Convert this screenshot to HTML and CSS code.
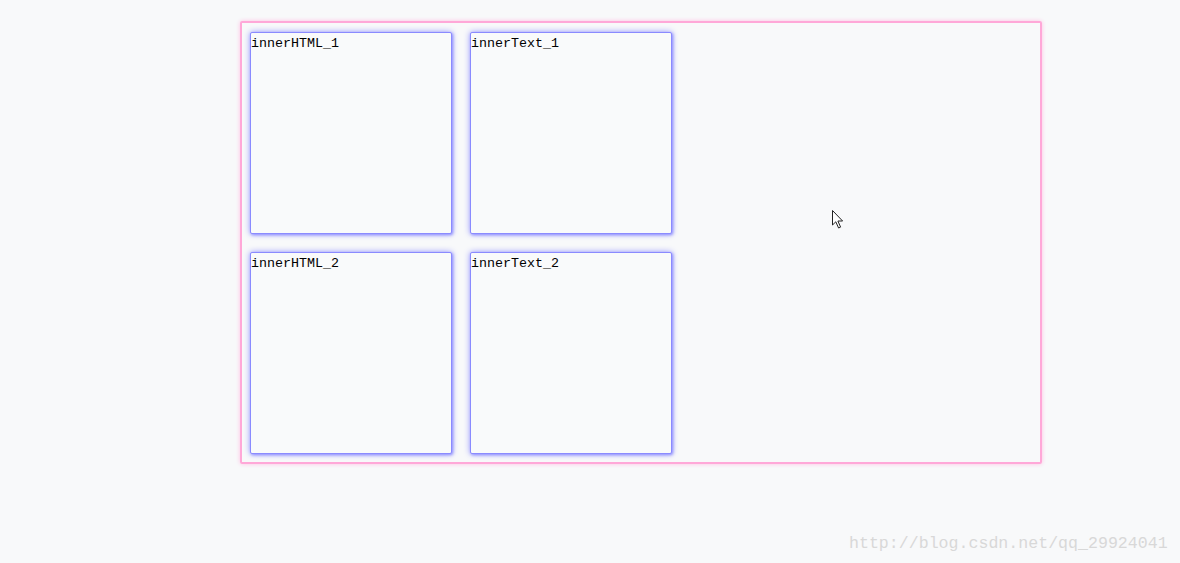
FILE: index.html
```html
<!DOCTYPE html>
<html lang="zh">
<head>
  <meta charset="UTF-8">
  <meta name="viewport" content="width=device-width, initial-scale=1.0">
  <title>innerHTML / innerText</title>
  <link rel="stylesheet" href="styles.css">
</head>
<body>
  <div class="wrap">
    <div class="box">innerHTML_1</div>
    <div class="box">innerText_1</div>
    <div class="box">innerHTML_2</div>
    <div class="box">innerText_2</div>
  </div>

  <!-- 鼠标指针 -->
  <svg class="cursor" width="14" height="21" viewBox="0 0 14 21">
    <path d="M1.5 1.5 L1.5 16 L4.8 12.8 L7.6 19 L9.6 18.1 L6.9 12 L11.6 12 Z" fill="#fff" stroke="#222" stroke-width="1"/>
  </svg>

  <div class="mark">http://blog.csdn.net/qq_29924041</div>
</body>
</html>
```
FILE: styles.css
```css
* { box-sizing: border-box; margin: 0; padding: 0; }
body { background: #f8f9fa; font-family: 'Liberation Mono', 'DejaVu Sans Mono', monospace; height: 563px; overflow: hidden; position: relative; }

/* 外层容器 */
.wrap {
  width: 802px; height: 443px;
  margin: 21px 0 0 240px;
  padding: 9px 0 0 8px;
  border: 2px solid #ffa8d8;
  border-radius: 2px;
  box-shadow: 0 0 4px #ffc0e2;
  display: grid;
  grid-template-columns: repeat(2, 202px);
  grid-auto-rows: 202px;
  column-gap: 18px; row-gap: 18px;
  align-content: start;
}

/* 方块 */
.box {
  border: 1px solid #8a8aff;
  border-radius: 2px;
  box-shadow: 0 0 6px #9a9aff, 1px 1px 3px #8c8cff;
  background: #f9fafb;
  font-size: 13.33px; line-height: 21px;
  color: #000;
}

.cursor { position: absolute; left: 831px; top: 209px; }

.mark {
  position: absolute; left: 849px; top: 534px;
  font-size: 16.6px; color: #d8d8d8;
}
```
